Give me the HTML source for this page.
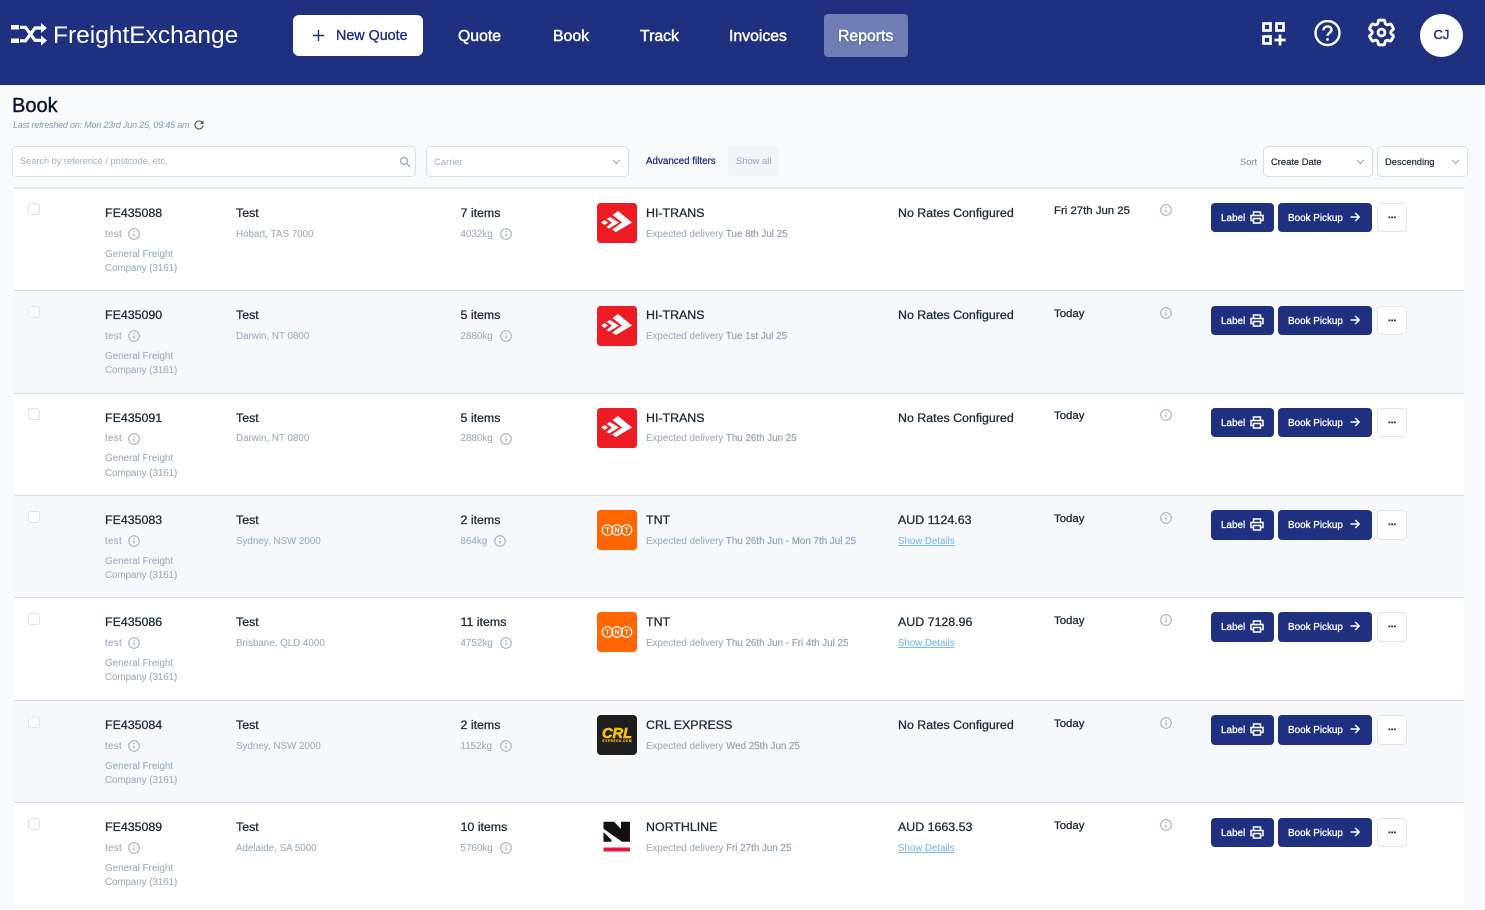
<!DOCTYPE html>
<html><head><meta charset="utf-8"><title>FreightExchange - Book</title>
<style>
*{box-sizing:border-box}
html,body{margin:0;padding:0}
body{width:1485px;height:910px;overflow:hidden;position:relative;background:#f8fafc;font-family:"Liberation Sans",sans-serif;color:#1e293b}
div,span,a,svg{position:absolute;white-space:nowrap}
.hd{left:0;top:0;width:1485px;height:85px;background:#1f3080}
.nv{top:27px;line-height:20px;font-size:15.8px;color:#fff;-webkit-text-stroke:.45px #fff}
.bx{background:#fff;border:1px solid #d5deeb;border-radius:5px;height:31px;top:146px;font-size:9.4px;line-height:29px;padding-left:7px}
.d{-webkit-text-stroke:.2px #1e293b}
.r{left:13.5px;width:1450px;height:102.4px;border-top:1px solid #d3deec}
.w{background:#fff}.g{background:#f7f8fb}
.cb{left:14.5px;top:14.5px;width:12px;height:12px;border:1px solid #dbe2ec;border-radius:3px;background:#fff}
.h{font-size:12.4px;line-height:16px;-webkit-text-stroke:.3px #1e293b;color:#1e293b}
.s{font-size:9.8px;line-height:14px;color:#a0aec3;-webkit-text-stroke:.12px #a0aec3}
.id{left:91.5px;top:16px}.nm{left:222.5px;top:16px}.it{left:447px;top:16px}.cr{left:632.5px;top:16px}.pr{left:884.500px;top:16px}.dt{left:1040.5px;top:14.5px;font-size:11.4px}
.s1{left:91.5px;top:38.5px;letter-spacing:.3px}.i1{left:114px;top:39px}
.s2{left:91.5px;top:58.5px}.s3{left:91.5px;top:73px;letter-spacing:-.05px}
.ad{left:222.5px;top:38.5px}.wt{left:447px;top:38.5px}.ex{left:632.5px;top:38.5px}
.f .s1,.f .s2,.f .ad,.f .wt,.f .ex{margin-top:1px}
.f .i1{margin-top:.5px}
.ex b{font-weight:normal;color:#94a3b8;-webkit-text-stroke:.2px #94a3b8}
.sd{left:884.500px;top:38.5px;color:#7cbcec;text-decoration:underline;font-size:9.7px;-webkit-text-stroke:.12px #7cbcec}
.lg{left:583.5px;top:14.3px;width:40px;height:40px}
.i2{left:1146.5px;top:15.500px}
.b{top:14.3px;height:29.5px;background:#1f3080;border-radius:4px;color:#fff;font-size:9.9px;line-height:31px;-webkit-text-stroke:.3px #fff}
.l{left:1197.5px;width:63px;padding-left:10px}
.p{left:1264.5px;width:94px;padding-left:10px}
.m{left:1363.5px;top:14.3px;width:30px;height:29.5px;background:#fff;border:1px solid #dde4ee;border-radius:4px}
.b svg{top:8px}
</style></head><body>
<svg width="0" height="0" style="left:0;top:0">
<defs>
<symbol id="inf" viewBox="0 0 12 12"><circle cx="6" cy="6" r="5.3" fill="none" stroke="#a3b1c7" stroke-width="1.1"/><path d="M6 5.4v3.2" stroke="#a3b1c7" stroke-width="1.3" fill="none"/><circle cx="6" cy="3.5" r=".8" fill="#a3b1c7"/></symbol>
<symbol id="prn" viewBox="0 0 14 13"><path d="M3.5 4V1h7v3M3.500 9.500H1V4.500h12v5h-2.500M3.500 7.500h7V12h-7z" fill="none" stroke="#fff" stroke-width="1.5"/></symbol>
<symbol id="arr" viewBox="0 0 10 10"><path d="M.5 5h8.500M5.200 1l4 4-4 4" fill="none" stroke="#fff" stroke-width="1.500"/></symbol>
<symbol id="dots" viewBox="0 0 28 28"><path d="M10.500 12.500h1.800v1.800h-1.800zM13.200 12.500H15v1.800h-1.800zM15.900 12.500h1.800v1.800h-1.800z" fill="#1e293b"/></symbol>
<symbol id="ht" viewBox="0 0 40 40"><rect width="40" height="40" rx="3.500" fill="#ed1c24"/><path d="M21 8 35 19.500 19 29 15 26.500 25 19.500 15.500 12zM13 14 22 19.500 12 25.500 9.500 24 15 19.500 9.500 16zM4 19.500 7.500 17 11 19.500 7.500 22z" fill="#fff"/></symbol>
<symbol id="tnt" viewBox="0 0 40 40"><rect width="40" height="40" rx="3.500" fill="#ff6600"/><g fill="none" stroke="#fff" stroke-width="1.200"><circle cx="10.500" cy="20" r="5.200"/><circle cx="20" cy="20" r="5.200"/><circle cx="29.500" cy="20" r="5.200"/></g><g fill="#fff" font-family="Liberation Sans,sans-serif" font-weight="bold" font-size="7" text-anchor="middle"><text x="10.500" y="22.500">T</text><text x="20" y="22.500">N</text><text x="29.500" y="22.500">T</text></g></symbol>
<symbol id="crl" viewBox="0 0 40 40"><rect width="40" height="40" rx="4" fill="#1f1f1f"/><text x="20" y="23" fill="#f5c211" stroke="#f5c211" stroke-width=".6" font-family="Liberation Sans,sans-serif" font-weight="bold" font-style="italic" font-size="14.500" text-anchor="middle" textLength="30" lengthAdjust="spacingAndGlyphs">CRL</text><text x="20" y="27" fill="#f5c211" stroke="#f5c211" stroke-width=".15" font-family="Liberation Sans,sans-serif" font-weight="bold" font-size="3.200" text-anchor="middle" textLength="29">EXPRESS.COM</text></symbol>
<symbol id="nl" viewBox="0 0 40 40"><path d="M6.500 3.700H17L24 11V3.700h9v20h-8L6.500 10.700zM6.500 14l8 8v1.700h-8z" fill="#111"/><rect x="6.500" y="29.500" width="26.500" height="4" fill="#e8173f"/></symbol>
</defs></svg>

<div class="hd"></div>
<svg style="left:11px;top:22px" width="37" height="26" viewBox="11 22 37 26"><rect x="11" y="25" width="8" height="4.500" fill="#fff"/><rect x="11" y="38.500" width="8" height="4.500" fill="#fff"/><path d="M20 27.300h5.500L35 40.300h7M20 40.800h5.500L35 28h7" fill="none" stroke="#fff" stroke-width="3.200"/><path d="M41 23l6 5-6 5zM41 35.500l6 5-6 5z" fill="#fff"/></svg>
<div style="left:53px;top:20px;font-size:24.5px;line-height:32px;color:#fff">FreightExchange</div>
<div style="left:293px;top:15px;width:130px;height:41px;background:#fff;border-radius:6px"></div>
<svg style="left:313px;top:30px" width="11" height="11" viewBox="0 0 11 11"><path d="M5.500 0v11M0 5.500h11" stroke="#1f3080" stroke-width="1.400"/></svg>
<div style="left:336px;top:26px;font-size:14.3px;line-height:20px;color:#1f3080;-webkit-text-stroke:.35px #1f3080">New Quote</div>
<div class="nv" style="left:458px">Quote</div>
<div class="nv" style="left:553px">Book</div>
<div class="nv" style="left:640px">Track</div>
<div class="nv" style="left:729px">Invoices</div>
<div style="left:824px;top:14px;width:84px;height:43px;background:#6f7fb3;border-radius:4px"></div>
<div class="nv" style="left:838px;text-shadow:0 1px 2px rgba(20,30,80,.5)">Reports</div>
<svg style="left:1261px;top:21px" width="25" height="25" viewBox="0 0 25 25" fill="none" stroke="#fff" stroke-width="2.700"><rect x="2.500" y="2.500" width="7" height="7"/><rect x="15.500" y="2.500" width="7" height="7"/><rect x="2.500" y="15.500" width="7" height="7"/><path d="M19 13.500v11M13.500 19h11"/></svg>
<svg style="left:1314px;top:20px" width="27" height="27" viewBox="0 0 27 27" fill="none" stroke="#fff"><circle cx="13.500" cy="13" r="12" stroke-width="2.400"/><path d="M9.500 10.200c0-2.400 1.800-3.800 4-3.800s4 1.400 4 3.500c0 2.800-4 3-4 6" stroke-width="2.400"/><circle cx="13.500" cy="19.500" r="1.400" fill="#fff" stroke="none"/></svg>
<svg style="left:1365px;top:16px" width="33" height="33" viewBox="0 0 24 24" fill="none" stroke="#fff" stroke-width="2.100"><path d="M9.594 3.94c.09-.542.56-.94 1.11-.94h2.593c.55 0 1.02.398 1.11.94l.213 1.281c.063.374.313.686.645.87.074.04.147.083.22.127.325.196.72.257 1.075.124l1.217-.456a1.125 1.125 0 0 1 1.37.49l1.296 2.247a1.125 1.125 0 0 1-.26 1.431l-1.003.827c-.293.241-.438.613-.43.992a7.723 7.723 0 0 1 0 .255c-.008.378.137.75.43.991l1.004.827c.424.35.534.955.26 1.43l-1.298 2.247a1.125 1.125 0 0 1-1.369.491l-1.217-.456c-.355-.133-.75-.072-1.076.124a6.47 6.47 0 0 1-.22.128c-.331.183-.581.495-.644.869l-.213 1.281c-.09.543-.56.94-1.11.94h-2.594c-.55 0-1.019-.398-1.11-.94l-.213-1.281c-.062-.374-.312-.686-.644-.87a6.52 6.52 0 0 1-.22-.127c-.325-.196-.72-.257-1.076-.124l-1.217.456a1.125 1.125 0 0 1-1.369-.49l-1.297-2.247a1.125 1.125 0 0 1 .26-1.431l1.004-.827c.292-.24.437-.613.43-.991a6.932 6.932 0 0 1 0-.255c.007-.38-.138-.751-.43-.992l-1.004-.827a1.125 1.125 0 0 1-.26-1.43l1.297-2.247a1.125 1.125 0 0 1 1.37-.491l1.216.456c.356.133.751.072 1.076-.124.072-.044.146-.086.22-.128.332-.183.582-.495.644-.869l.214-1.28Z"/><circle cx="12" cy="12" r="2.500"/></svg>
<div style="left:1420px;top:14px;width:43px;height:43px;border-radius:50%;background:#fff;text-align:center;line-height:42px;font-size:13px;color:#1f3080;-webkit-text-stroke:.4px #1f3080">CJ</div>

<div style="left:12px;top:94px;font-size:20px;line-height:25px;color:#0f172a;-webkit-text-stroke:.4px #0f172a">Book</div>
<div style="left:13px;top:119px;font-size:9px;line-height:13px;font-style:italic;color:#94a3b8;letter-spacing:-.2px;-webkit-text-stroke:.1px #94a3b8">Last refreshed on: Mon 23rd Jun 25, 09:45 am</div>
<svg style="left:194px;top:120px" width="10" height="10" viewBox="0 0 10 10" fill="none" stroke="#475569" stroke-width="1.100"><path d="M8.500 3A4 4 0 1 0 9 5.500"/><path d="M9 .8V3.400H6.400" /></svg>

<div class="bx" style="left:12px;width:404px;color:#a0aec3;font-size:9.2px">Search by reference / postcode, etc.</div>
<svg style="left:399px;top:156px" width="12" height="12" viewBox="0 0 12 12" fill="none" stroke="#9aa8bd" stroke-width="1.300"><circle cx="5" cy="5" r="3.500"/><path d="M7.700 7.700 11 11"/></svg>
<div class="bx" style="left:426px;width:203px;color:#a0aec3">Carrier</div>
<svg style="left:612px;top:159px" width="9" height="6" viewBox="0 0 9 6" fill="none" stroke="#94a3b8" stroke-width="1"><path d="M1 1l3.500 3.500L8 1"/></svg>
<div style="left:646px;top:155px;font-size:9.800px;line-height:14px;color:#1f3080;-webkit-text-stroke:.25px #1f3080">Advanced filters</div>
<div style="left:728px;top:146px;width:51px;height:30px;background:#f1f4f9;border-radius:4px"></div>
<div style="left:736px;top:154px;font-size:9.400px;line-height:14px;color:#a0aec3;-webkit-text-stroke:.12px #a0aec3">Show all</div>
<div style="left:1240px;top:155px;font-size:9.300px;line-height:14px;color:#7b8798">Sort</div>
<div class="bx d" style="left:1263px;width:110px;color:#1e293b">Create Date</div>
<svg style="left:1356px;top:159px" width="9" height="6" viewBox="0 0 9 6" fill="none" stroke="#94a3b8" stroke-width="1"><path d="M1 1l3.500 3.500L8 1"/></svg>
<div class="bx d" style="left:1377px;width:91px;color:#1e293b">Descending</div>
<svg style="left:1451px;top:159px" width="9" height="6" viewBox="0 0 9 6" fill="none" stroke="#94a3b8" stroke-width="1"><path d="M1 1l3.500 3.500L8 1"/></svg>

<div class="r w f" style="top:186.5px;border-top:2px solid #e2e8f0"><span class="cb"></span><span class="h id">FE435088</span><span class="s s1">test</span><svg class="i1" width="12" height="12"><use href="#inf"/></svg><span class="s s2">General Freight</span><span class="s s3">Company (3161)</span><span class="h nm">Test</span><span class="s ad">Hobart, TAS 7000</span><span class="h it">7 items</span><span class="s wt">4032kg</span><svg style="left:486px;top:39px" width="12" height="12"><use href="#inf"/></svg><svg class="lg"><use href="#ht"/></svg><span class="h cr">HI-TRANS</span><span class="s ex">Expected delivery <b>Tue 8th Jul 25</b></span><span class="h pr">No Rates Configured</span><span class="h dt">Fri 27th Jun 25</span><svg class="i2" width="12" height="12"><use href="#inf"/></svg><div class="b l">Label<svg style="left:39px" width="14" height="13"><use href="#prn"/></svg></div><div class="b p">Book Pickup<svg style="left:72px;top:9px" width="10" height="10"><use href="#arr"/></svg></div><div class="m"><svg style="left:0;top:0" width="28" height="28"><use href="#dots"/></svg></div></div>

<div class="r g" style="top:290.4px"><span class="cb"></span><span class="h id">FE435090</span><span class="s s1">test</span><svg class="i1" width="12" height="12"><use href="#inf"/></svg><span class="s s2">General Freight</span><span class="s s3">Company (3161)</span><span class="h nm">Test</span><span class="s ad">Darwin, NT 0800</span><span class="h it">5 items</span><span class="s wt">2880kg</span><svg style="left:486px;top:39px" width="12" height="12"><use href="#inf"/></svg><svg class="lg"><use href="#ht"/></svg><span class="h cr">HI-TRANS</span><span class="s ex">Expected delivery <b>Tue 1st Jul 25</b></span><span class="h pr">No Rates Configured</span><span class="h dt">Today</span><svg class="i2" width="12" height="12"><use href="#inf"/></svg><div class="b l">Label<svg style="left:39px" width="14" height="13"><use href="#prn"/></svg></div><div class="b p">Book Pickup<svg style="left:72px;top:9px" width="10" height="10"><use href="#arr"/></svg></div><div class="m"><svg style="left:0;top:0" width="28" height="28"><use href="#dots"/></svg></div></div>

<div class="r w" style="top:392.5px"><span class="cb"></span><span class="h id">FE435091</span><span class="s s1">test</span><svg class="i1" width="12" height="12"><use href="#inf"/></svg><span class="s s2">General Freight</span><span class="s s3">Company (3161)</span><span class="h nm">Test</span><span class="s ad">Darwin, NT 0800</span><span class="h it">5 items</span><span class="s wt">2880kg</span><svg style="left:486px;top:39px" width="12" height="12"><use href="#inf"/></svg><svg class="lg"><use href="#ht"/></svg><span class="h cr">HI-TRANS</span><span class="s ex">Expected delivery <b>Thu 26th Jun 25</b></span><span class="h pr">No Rates Configured</span><span class="h dt">Today</span><svg class="i2" width="12" height="12"><use href="#inf"/></svg><div class="b l">Label<svg style="left:39px" width="14" height="13"><use href="#prn"/></svg></div><div class="b p">Book Pickup<svg style="left:72px;top:9px" width="10" height="10"><use href="#arr"/></svg></div><div class="m"><svg style="left:0;top:0" width="28" height="28"><use href="#dots"/></svg></div></div>

<div class="r g" style="top:495.2px"><span class="cb"></span><span class="h id">FE435083</span><span class="s s1">test</span><svg class="i1" width="12" height="12"><use href="#inf"/></svg><span class="s s2">General Freight</span><span class="s s3">Company (3161)</span><span class="h nm">Test</span><span class="s ad">Sydney, NSW 2000</span><span class="h it">2 items</span><span class="s wt">864kg</span><svg style="left:480px;top:39px" width="12" height="12"><use href="#inf"/></svg><svg class="lg"><use href="#tnt"/></svg><span class="h cr">TNT</span><span class="s ex">Expected delivery <b>Thu 26th Jun - Mon 7th Jul 25</b></span><span class="h pr">AUD 1124.63</span><span class="s sd">Show Details</span><span class="h dt">Today</span><svg class="i2" width="12" height="12"><use href="#inf"/></svg><div class="b l">Label<svg style="left:39px" width="14" height="13"><use href="#prn"/></svg></div><div class="b p">Book Pickup<svg style="left:72px;top:9px" width="10" height="10"><use href="#arr"/></svg></div><div class="m"><svg style="left:0;top:0" width="28" height="28"><use href="#dots"/></svg></div></div>

<div class="r w" style="top:597.2px"><span class="cb"></span><span class="h id">FE435086</span><span class="s s1">test</span><svg class="i1" width="12" height="12"><use href="#inf"/></svg><span class="s s2">General Freight</span><span class="s s3">Company (3161)</span><span class="h nm">Test</span><span class="s ad">Brisbane, QLD 4000</span><span class="h it">11 items</span><span class="s wt">4752kg</span><svg style="left:486px;top:39px" width="12" height="12"><use href="#inf"/></svg><svg class="lg"><use href="#tnt"/></svg><span class="h cr">TNT</span><span class="s ex">Expected delivery <b>Thu 26th Jun - Fri 4th Jul 25</b></span><span class="h pr">AUD 7128.96</span><span class="s sd">Show Details</span><span class="h dt">Today</span><svg class="i2" width="12" height="12"><use href="#inf"/></svg><div class="b l">Label<svg style="left:39px" width="14" height="13"><use href="#prn"/></svg></div><div class="b p">Book Pickup<svg style="left:72px;top:9px" width="10" height="10"><use href="#arr"/></svg></div><div class="m"><svg style="left:0;top:0" width="28" height="28"><use href="#dots"/></svg></div></div>

<div class="r g" style="top:700px"><span class="cb"></span><span class="h id">FE435084</span><span class="s s1">test</span><svg class="i1" width="12" height="12"><use href="#inf"/></svg><span class="s s2">General Freight</span><span class="s s3">Company (3161)</span><span class="h nm">Test</span><span class="s ad">Sydney, NSW 2000</span><span class="h it">2 items</span><span class="s wt">1152kg</span><svg style="left:486px;top:39px" width="12" height="12"><use href="#inf"/></svg><svg class="lg"><use href="#crl"/></svg><span class="h cr">CRL EXPRESS</span><span class="s ex">Expected delivery <b>Wed 25th Jun 25</b></span><span class="h pr">No Rates Configured</span><span class="h dt">Today</span><svg class="i2" width="12" height="12"><use href="#inf"/></svg><div class="b l">Label<svg style="left:39px" width="14" height="13"><use href="#prn"/></svg></div><div class="b p">Book Pickup<svg style="left:72px;top:9px" width="10" height="10"><use href="#arr"/></svg></div><div class="m"><svg style="left:0;top:0" width="28" height="28"><use href="#dots"/></svg></div></div>

<div class="r w" style="top:802.4px"><span class="cb"></span><span class="h id">FE435089</span><span class="s s1">test</span><svg class="i1" width="12" height="12"><use href="#inf"/></svg><span class="s s2">General Freight</span><span class="s s3">Company (3161)</span><span class="h nm">Test</span><span class="s ad">Adelaide, SA 5000</span><span class="h it">10 items</span><span class="s wt">5760kg</span><svg style="left:486px;top:39px" width="12" height="12"><use href="#inf"/></svg><svg class="lg"><use href="#nl"/></svg><span class="h cr">NORTHLINE</span><span class="s ex">Expected delivery <b>Fri 27th Jun 25</b></span><span class="h pr">AUD 1663.53</span><span class="s sd">Show Details</span><span class="h dt">Today</span><svg class="i2" width="12" height="12"><use href="#inf"/></svg><div class="b l">Label<svg style="left:39px" width="14" height="13"><use href="#prn"/></svg></div><div class="b p">Book Pickup<svg style="left:72px;top:9px" width="10" height="10"><use href="#arr"/></svg></div><div class="m"><svg style="left:0;top:0" width="28" height="28"><use href="#dots"/></svg></div></div>
</body></html>
